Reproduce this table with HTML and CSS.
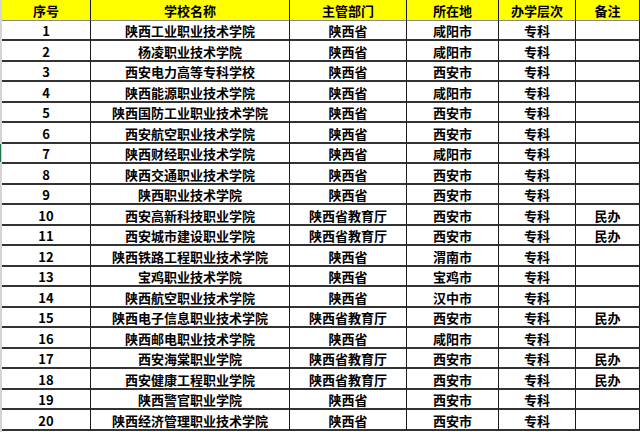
FILE: index.html
```html
<!DOCTYPE html>
<html lang="zh">
<head>
<meta charset="utf-8">
<title>陕西高职院校名单</title>
<link rel="stylesheet" href="styles.css">
</head>
<body>
<div class="sheet">
  <div class="gutter"><div class="mark"></div></div>
  <div class="grid">
    <div class="c h">序号</div><div class="c h">学校名称</div><div class="c h">主管部门</div><div class="c h">所在地</div><div class="c h">办学层次</div><div class="c h">备注</div>
    <div class="c">1</div><div class="c">陕西工业职业技术学院</div><div class="c">陕西省</div><div class="c">咸阳市</div><div class="c">专科</div><div class="c"></div>
    <div class="c">2</div><div class="c">杨凌职业技术学院</div><div class="c">陕西省</div><div class="c">咸阳市</div><div class="c">专科</div><div class="c"></div>
    <div class="c">3</div><div class="c">西安电力高等专科学校</div><div class="c">陕西省</div><div class="c">西安市</div><div class="c">专科</div><div class="c"></div>
    <div class="c">4</div><div class="c">陕西能源职业技术学院</div><div class="c">陕西省</div><div class="c">咸阳市</div><div class="c">专科</div><div class="c"></div>
    <div class="c">5</div><div class="c">陕西国防工业职业技术学院</div><div class="c">陕西省</div><div class="c">西安市</div><div class="c">专科</div><div class="c"></div>
    <div class="c">6</div><div class="c">西安航空职业技术学院</div><div class="c">陕西省</div><div class="c">西安市</div><div class="c">专科</div><div class="c"></div>
    <div class="c">7</div><div class="c">陕西财经职业技术学院</div><div class="c">陕西省</div><div class="c">咸阳市</div><div class="c">专科</div><div class="c"></div>
    <div class="c">8</div><div class="c">陕西交通职业技术学院</div><div class="c">陕西省</div><div class="c">西安市</div><div class="c">专科</div><div class="c"></div>
    <div class="c">9</div><div class="c">陕西职业技术学院</div><div class="c">陕西省</div><div class="c">西安市</div><div class="c">专科</div><div class="c"></div>
    <div class="c">10</div><div class="c">西安高新科技职业学院</div><div class="c">陕西省教育厅</div><div class="c">西安市</div><div class="c">专科</div><div class="c">民办</div>
    <div class="c">11</div><div class="c">西安城市建设职业学院</div><div class="c">陕西省教育厅</div><div class="c">西安市</div><div class="c">专科</div><div class="c">民办</div>
    <div class="c">12</div><div class="c">陕西铁路工程职业技术学院</div><div class="c">陕西省</div><div class="c">渭南市</div><div class="c">专科</div><div class="c"></div>
    <div class="c">13</div><div class="c">宝鸡职业技术学院</div><div class="c">陕西省</div><div class="c">宝鸡市</div><div class="c">专科</div><div class="c"></div>
    <div class="c">14</div><div class="c">陕西航空职业技术学院</div><div class="c">陕西省</div><div class="c">汉中市</div><div class="c">专科</div><div class="c"></div>
    <div class="c">15</div><div class="c">陕西电子信息职业技术学院</div><div class="c">陕西省教育厅</div><div class="c">西安市</div><div class="c">专科</div><div class="c">民办</div>
    <div class="c">16</div><div class="c">陕西邮电职业技术学院</div><div class="c">陕西省</div><div class="c">咸阳市</div><div class="c">专科</div><div class="c"></div>
    <div class="c">17</div><div class="c">西安海棠职业学院</div><div class="c">陕西省教育厅</div><div class="c">西安市</div><div class="c">专科</div><div class="c">民办</div>
    <div class="c">18</div><div class="c">西安健康工程职业学院</div><div class="c">陕西省教育厅</div><div class="c">西安市</div><div class="c">专科</div><div class="c">民办</div>
    <div class="c">19</div><div class="c">陕西警官职业学院</div><div class="c">陕西省</div><div class="c">西安市</div><div class="c">专科</div><div class="c"></div>
    <div class="c">20</div><div class="c">陕西经济管理职业技术学院</div><div class="c">陕西省</div><div class="c">西安市</div><div class="c">专科</div><div class="c"></div>
  </div>
</div>
</body>
</html>
```

FILE: styles.css
```css
html, body {
  margin: 0;
  padding: 0;
  background: #ffffff;
}
body {
  width: 640px;
  height: 432px;
  overflow: hidden;
  font-family: "Noto Sans CJK SC", "Noto Sans", sans-serif;
  font-weight: 700;
  font-size: 13px;
  color: #000;
}
.sheet {
  display: flex;
  align-items: flex-start;
}
.gutter {
  width: 2px;
  height: 432px;
  background: #d4d4d4;
  flex: none;
  position: relative;
}
.mark {
  position: absolute;
  left: 0;
  top: 144px;
  width: 1px;
  height: 18px;
  background: #217346;
}
.grid {
  display: grid;
  grid-template-columns: 89px 199px 117px 92px 77px 64px;
  grid-auto-rows: 20.5px;
}
.c {
  box-sizing: border-box;
  border-right: 1px solid #1a1a1a;
  border-bottom: 2px solid #333333;
  display: flex;
  align-items: center;
  justify-content: center;
  line-height: 1;
  white-space: nowrap;
  padding-top: 2px;
}
.h {
  background: #ffff00;
  border-bottom: 1px solid #8a8a8a;
  padding-top: 1px;
}
```
